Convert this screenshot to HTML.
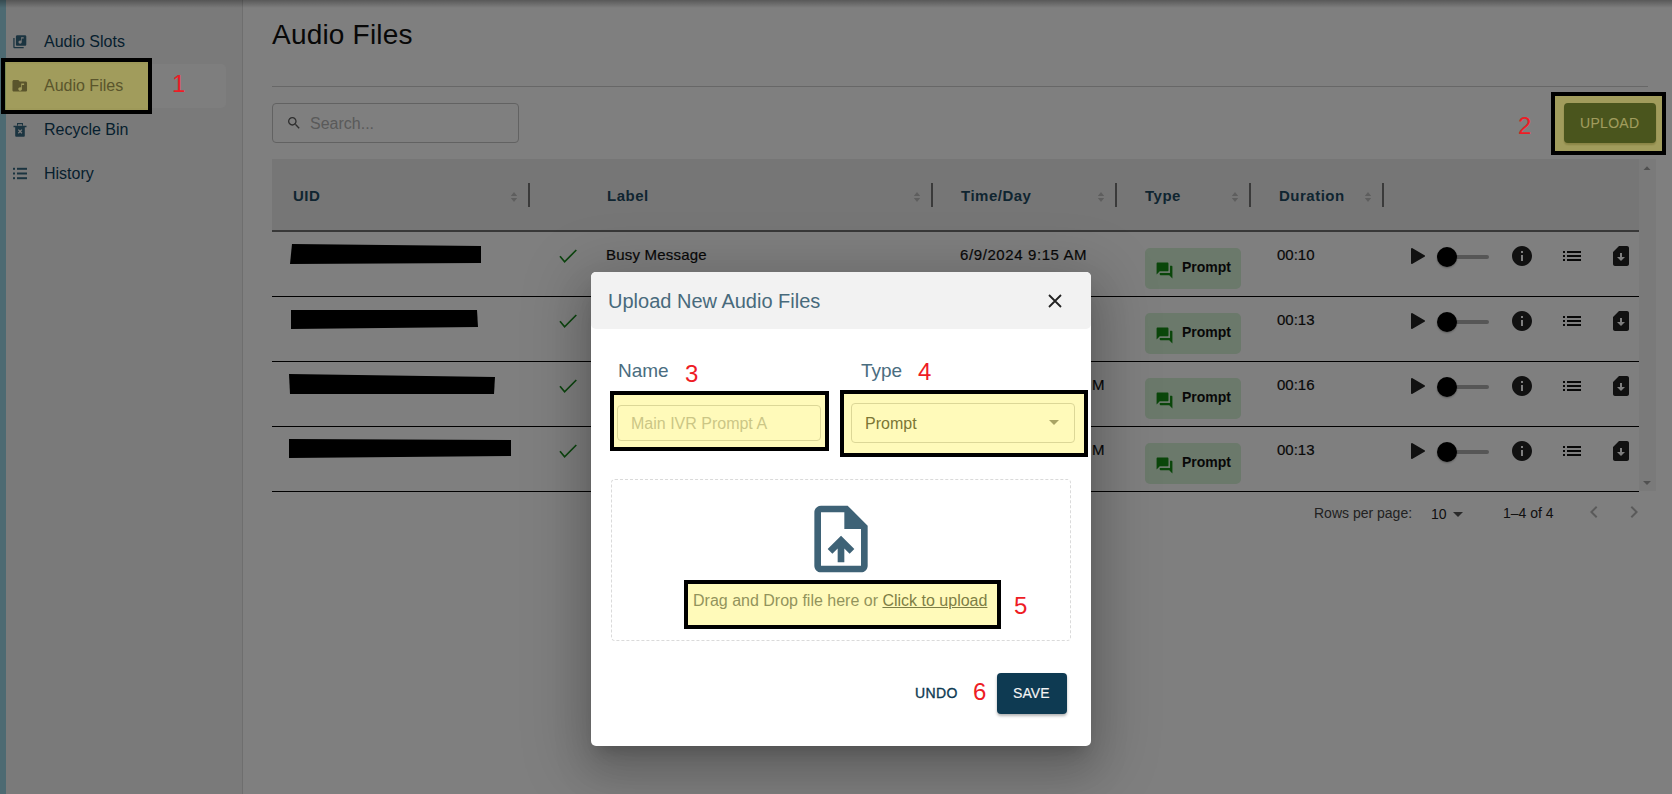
<!DOCTYPE html>
<html><head><meta charset="utf-8"><style>
html,body{margin:0;padding:0;}
body{width:1672px;height:794px;overflow:hidden;position:relative;background:#fff;font-family:'Liberation Sans',sans-serif;}
.t{position:absolute;white-space:nowrap;line-height:1;font-family:'Liberation Sans',sans-serif;}
</style></head><body>
<div id="page">
<div style="position:absolute;left:0;top:0;width:243px;height:794px;background:#f4f4f4;border-right:1px solid #dcdcdc;box-sizing:border-box"></div>
<div style="position:absolute;left:0;top:0;width:6px;height:794px;background:#9bd4e4"></div>
<div style="position:absolute;left:6px;top:64px;width:220px;height:44px;background:#fcfcfc;border-radius:0 5px 5px 0"></div>
<div class="t" style="left:44px;top:34px;font-size:16px;color:#0d3f5c;">Audio Slots</div>
<div class="t" style="left:44px;top:78px;font-size:16px;color:#3a3a7a;">Audio Files</div>
<div class="t" style="left:44px;top:122px;font-size:16px;color:#0d3f5c;">Recycle Bin</div>
<div class="t" style="left:44px;top:166px;font-size:16px;color:#0d3f5c;">History</div>
<svg style="position:absolute;left:12.1px;top:33.9px" width="15.6" height="15.6" viewBox="0 0 24 24"><path fill="#376881" d="M20 2H8c-1.1 0-2 .9-2 2v12c0 1.1.9 2 2 2h12c1.1 0 2-.9 2-2V4c0-1.1-.9-2-2-2zm-2 5h-3v5.5c0 1.38-1.12 2.5-2.5 2.5S10 13.88 10 12.5s1.12-2.5 2.5-2.5c.57 0 1.08.19 1.5.51V5h4v2zM4 6H2v14c0 1.1.9 2 2 2h14v-2H4V6z"/></svg>
<svg style="position:absolute;left:11px;top:77px" width="17.5" height="17.5" viewBox="0 0 24 24"><path fill="#3a3a7a" d="M20 6h-8l-2-2H4c-1.1 0-1.99.9-1.99 2L2 18c0 1.1.9 2 2 2h16c1.1 0 2-.9 2-2V8c0-1.1-.9-2-2-2zm-2 5h-3v5.5c0 1.38-1.12 2.5-2.5 2.5S10 17.88 10 16.5s1.12-2.5 2.5-2.5c.57 0 1.08.19 1.5.51V9h4v2z"/></svg>
<svg style="position:absolute;left:0;top:0;overflow:visible" width="1" height="1"><path fill="#376881" fill-rule="evenodd" d="M17 123h6v3h-1v-1.8h-4v1.8h-1z M13.5 125.8h13v1.4h-13z M15.2 127.2h9.6v8.6q0 .9-.9.9h-7.8q-.9 0-.9-.9z"/><path stroke="#f4f4f4" stroke-width="1.3" d="M18.3 129.6l3.6 3.6M21.9 129.6l-3.6 3.6"/></svg>
<svg style="position:absolute;left:0;top:0;overflow:visible" width="1" height="1"><g fill="#376881"><rect x="13" y="167.8" width="2" height="2"/><rect x="13" y="172.5" width="2" height="2"/><rect x="13" y="177.2" width="2" height="2"/><rect x="17" y="167.8" width="10" height="2"/><rect x="17" y="172.5" width="10" height="2"/><rect x="17" y="177.2" width="10" height="2"/></g></svg>
<div class="t" style="left:272px;top:21px;font-size:28px;color:#111;letter-spacing:.2px">Audio Files</div>
<div style="position:absolute;left:272px;top:86px;width:1376px;height:1px;background:#cfcfcf"></div>
<div style="position:absolute;left:272px;top:103px;width:247px;height:40px;border:1px solid #c4c4c4;border-radius:4px;box-sizing:border-box"></div>
<svg style="position:absolute;left:286px;top:115.3px" width="16" height="16" viewBox="0 0 24 24"><path fill="#5c5c5c" d="M15.5 14h-.79l-.28-.27C15.41 12.59 16 11.11 16 9.5 16 5.91 13.09 3 9.5 3S3 5.91 3 9.5 5.91 16 9.5 16c1.61 0 3.09-.59 4.23-1.57l.27.28v.79l5 4.99L20.49 19l-4.99-5zm-6 0C7.01 14 5 11.99 5 9.5S7.01 5 9.5 5 14 7.01 14 9.5 11.99 14 9.5 14z"/></svg>
<div class="t" style="left:310px;top:116px;font-size:16px;color:#b4b4b4;">Search...</div>
<div style="position:absolute;left:1564px;top:103px;width:92px;height:40px;background:#0e3a52;border-radius:4px;box-shadow:0 2px 2px rgba(0,0,0,.25)"></div>
<div class="t" style="left:1580px;top:116px;font-size:14px;color:#fff;letter-spacing:.3px">UPLOAD</div>
<div style="position:absolute;left:272px;top:159px;width:1367px;height:72px;background:#ededed"></div>
<div style="position:absolute;left:272px;top:230px;width:1367px;height:2px;background:#707070"></div>
<div class="t" style="left:293px;top:188px;font-size:15px;color:#1f4a62;font-weight:bold;letter-spacing:.5px">UID</div>
<div class="t" style="left:607px;top:188px;font-size:15px;color:#1f4a62;font-weight:bold;letter-spacing:.5px">Label</div>
<div class="t" style="left:961px;top:188px;font-size:15px;color:#1f4a62;font-weight:bold;letter-spacing:.5px">Time/Day</div>
<div class="t" style="left:1145px;top:188px;font-size:15px;color:#1f4a62;font-weight:bold;letter-spacing:.5px">Type</div>
<div class="t" style="left:1279px;top:188px;font-size:15px;color:#1f4a62;font-weight:bold;letter-spacing:.5px">Duration</div>
<svg style="position:absolute;left:510px;top:191px" width="8" height="12" viewBox="0 0 8 12"><path fill="#bdbdbd" d="M0.8 5 L4 1 L7.2 5Z M0.8 7 L4 11 L7.2 7Z"/></svg>
<svg style="position:absolute;left:913px;top:191px" width="8" height="12" viewBox="0 0 8 12"><path fill="#bdbdbd" d="M0.8 5 L4 1 L7.2 5Z M0.8 7 L4 11 L7.2 7Z"/></svg>
<svg style="position:absolute;left:1097px;top:191px" width="8" height="12" viewBox="0 0 8 12"><path fill="#bdbdbd" d="M0.8 5 L4 1 L7.2 5Z M0.8 7 L4 11 L7.2 7Z"/></svg>
<svg style="position:absolute;left:1231px;top:191px" width="8" height="12" viewBox="0 0 8 12"><path fill="#bdbdbd" d="M0.8 5 L4 1 L7.2 5Z M0.8 7 L4 11 L7.2 7Z"/></svg>
<svg style="position:absolute;left:1364px;top:191px" width="8" height="12" viewBox="0 0 8 12"><path fill="#bdbdbd" d="M0.8 5 L4 1 L7.2 5Z M0.8 7 L4 11 L7.2 7Z"/></svg>
<div style="position:absolute;left:528px;top:183px;width:2px;height:24px;background:#757575"></div>
<div style="position:absolute;left:931px;top:183px;width:2px;height:24px;background:#757575"></div>
<div style="position:absolute;left:1115px;top:183px;width:2px;height:24px;background:#757575"></div>
<div style="position:absolute;left:1249px;top:183px;width:2px;height:24px;background:#757575"></div>
<div style="position:absolute;left:1382px;top:183px;width:2px;height:24px;background:#757575"></div>
<div style="position:absolute;left:1639px;top:159px;width:17px;height:332px;background:#f4f4f4"></div>
<svg style="position:absolute;left:1642px;top:165px" width="10" height="6" viewBox="0 0 10 6"><path fill="#a0a0a0" d="M1.5 5L5 1.2L8.5 5Z"/></svg>
<svg style="position:absolute;left:1642px;top:480px" width="10" height="6" viewBox="0 0 10 6"><path fill="#a3a3a3" d="M1 1L5 5L9 1Z"/></svg>
<div style="position:absolute;left:272px;top:296px;width:1367px;height:1px;background:#000"></div>
<svg style="position:absolute;left:0;top:0;overflow:visible" width="1" height="1"><polygon points="292,244 481,246 481,263 290,264" fill="#000"/></svg>
<svg style="position:absolute;left:556px;top:244px" width="24" height="24" viewBox="0 0 24 24"><path fill="none" stroke="#1a8a1f" stroke-width="1.7" d="M4 12.3 L8.6 17.8 L20.3 6"/></svg>
<div class="t" style="left:606px;top:247px;font-size:15px;color:#111;letter-spacing:.2px;-webkit-text-stroke:.2px #111">Busy Message</div>
<div class="t" style="left:960px;top:247px;font-size:15px;color:#111;letter-spacing:.6px;-webkit-text-stroke:.2px #111">6/9/2024 9:15 AM</div>
<div style="position:absolute;left:1145px;top:248px;width:96px;height:41px;background:#d6f2d6;border-radius:5px"></div>
<svg style="position:absolute;left:1154.6px;top:260.5px" width="19" height="19" viewBox="0 0 24 24"><path fill="#148c14" d="M21 6h-2v9H6v2c0 .55.45 1 1 1h11l4 4V7c0-.55-.45-1-1-1zm-4 6V3c0-.55-.45-1-1-1H3c-.55 0-1 .45-1 1v14l4-4h10c.55 0 1-.45 1-1z"/></svg>
<div class="t" style="left:1182px;top:260px;font-size:14px;color:#111;font-weight:bold">Prompt</div>
<div class="t" style="left:1277px;top:247px;font-size:15px;color:#111;-webkit-text-stroke:.2px #111">00:10</div>
<svg style="position:absolute;left:1409px;top:246px" width="20" height="20" viewBox="0 0 20 20"><path fill="#222" stroke="#222" stroke-width="2" stroke-linejoin="round" d="M3 3 L15 10 L3 17Z"/></svg>
<div style="position:absolute;left:1447px;top:255px;width:42px;height:3.5px;background:#adadad;border-radius:2px"></div>
<div style="position:absolute;left:1437px;top:247px;width:20px;height:20px;background:#000;border-radius:50%;box-shadow:0 1px 2px rgba(0,0,0,.3)"></div>
<svg style="position:absolute;left:1510px;top:244px" width="24" height="24" viewBox="0 0 24 24"><path fill="#222" d="M12 2C6.48 2 2 6.48 2 12s4.48 10 10 10 10-4.48 10-10S17.52 2 12 2zm1 15h-2v-6h2v6zm0-8h-2V7h2v2z"/></svg>
<svg style="position:absolute;left:1563px;top:251px" width="18" height="10"><g fill="#111"><rect x="0" y="0" width="2" height="2"/><rect x="0" y="4" width="2" height="2"/><rect x="0" y="8" width="2" height="2"/><rect x="4" y="0" width="14" height="2"/><rect x="4" y="4" width="14" height="2"/><rect x="4" y="8" width="14" height="2"/></g></svg>
<svg style="position:absolute;left:1609px;top:244px" width="24" height="24" viewBox="0 0 24 24"><path fill="#222" d="M18 2h-8L4 8v12c0 1.1.9 2 2 2h12c1.1 0 2-.9 2-2V4c0-1.1-.9-2-2-2zm-6 15-4-4h3V9.02L13 9v4h3l-4 4z"/></svg>
<div style="position:absolute;left:272px;top:361px;width:1367px;height:1px;background:#000"></div>
<svg style="position:absolute;left:0;top:0;overflow:visible" width="1" height="1"><polygon points="291,310 477,310 478,327 291,329" fill="#000"/></svg>
<svg style="position:absolute;left:556px;top:309px" width="24" height="24" viewBox="0 0 24 24"><path fill="none" stroke="#1a8a1f" stroke-width="1.7" d="M4 12.3 L8.6 17.8 L20.3 6"/></svg>
<div style="position:absolute;left:1145px;top:313px;width:96px;height:41px;background:#d6f2d6;border-radius:5px"></div>
<svg style="position:absolute;left:1154.6px;top:325.5px" width="19" height="19" viewBox="0 0 24 24"><path fill="#148c14" d="M21 6h-2v9H6v2c0 .55.45 1 1 1h11l4 4V7c0-.55-.45-1-1-1zm-4 6V3c0-.55-.45-1-1-1H3c-.55 0-1 .45-1 1v14l4-4h10c.55 0 1-.45 1-1z"/></svg>
<div class="t" style="left:1182px;top:325px;font-size:14px;color:#111;font-weight:bold">Prompt</div>
<div class="t" style="left:1277px;top:312px;font-size:15px;color:#111;-webkit-text-stroke:.2px #111">00:13</div>
<svg style="position:absolute;left:1409px;top:311px" width="20" height="20" viewBox="0 0 20 20"><path fill="#222" stroke="#222" stroke-width="2" stroke-linejoin="round" d="M3 3 L15 10 L3 17Z"/></svg>
<div style="position:absolute;left:1447px;top:320px;width:42px;height:3.5px;background:#adadad;border-radius:2px"></div>
<div style="position:absolute;left:1437px;top:312px;width:20px;height:20px;background:#000;border-radius:50%;box-shadow:0 1px 2px rgba(0,0,0,.3)"></div>
<svg style="position:absolute;left:1510px;top:309px" width="24" height="24" viewBox="0 0 24 24"><path fill="#222" d="M12 2C6.48 2 2 6.48 2 12s4.48 10 10 10 10-4.48 10-10S17.52 2 12 2zm1 15h-2v-6h2v6zm0-8h-2V7h2v2z"/></svg>
<svg style="position:absolute;left:1563px;top:316px" width="18" height="10"><g fill="#111"><rect x="0" y="0" width="2" height="2"/><rect x="0" y="4" width="2" height="2"/><rect x="0" y="8" width="2" height="2"/><rect x="4" y="0" width="14" height="2"/><rect x="4" y="4" width="14" height="2"/><rect x="4" y="8" width="14" height="2"/></g></svg>
<svg style="position:absolute;left:1609px;top:309px" width="24" height="24" viewBox="0 0 24 24"><path fill="#222" d="M18 2h-8L4 8v12c0 1.1.9 2 2 2h12c1.1 0 2-.9 2-2V4c0-1.1-.9-2-2-2zm-6 15-4-4h3V9.02L13 9v4h3l-4 4z"/></svg>
<div style="position:absolute;left:272px;top:426px;width:1367px;height:1px;background:#000"></div>
<svg style="position:absolute;left:0;top:0;overflow:visible" width="1" height="1"><polygon points="289,374 495,377 494,394 290,394" fill="#000"/></svg>
<svg style="position:absolute;left:556px;top:374px" width="24" height="24" viewBox="0 0 24 24"><path fill="none" stroke="#1a8a1f" stroke-width="1.7" d="M4 12.3 L8.6 17.8 L20.3 6"/></svg>
<div class="t" style="left:1092px;top:377px;font-size:15px;color:#111;-webkit-text-stroke:.2px #111">M</div>
<div style="position:absolute;left:1145px;top:378px;width:96px;height:41px;background:#d6f2d6;border-radius:5px"></div>
<svg style="position:absolute;left:1154.6px;top:390.5px" width="19" height="19" viewBox="0 0 24 24"><path fill="#148c14" d="M21 6h-2v9H6v2c0 .55.45 1 1 1h11l4 4V7c0-.55-.45-1-1-1zm-4 6V3c0-.55-.45-1-1-1H3c-.55 0-1 .45-1 1v14l4-4h10c.55 0 1-.45 1-1z"/></svg>
<div class="t" style="left:1182px;top:390px;font-size:14px;color:#111;font-weight:bold">Prompt</div>
<div class="t" style="left:1277px;top:377px;font-size:15px;color:#111;-webkit-text-stroke:.2px #111">00:16</div>
<svg style="position:absolute;left:1409px;top:376px" width="20" height="20" viewBox="0 0 20 20"><path fill="#222" stroke="#222" stroke-width="2" stroke-linejoin="round" d="M3 3 L15 10 L3 17Z"/></svg>
<div style="position:absolute;left:1447px;top:385px;width:42px;height:3.5px;background:#adadad;border-radius:2px"></div>
<div style="position:absolute;left:1437px;top:377px;width:20px;height:20px;background:#000;border-radius:50%;box-shadow:0 1px 2px rgba(0,0,0,.3)"></div>
<svg style="position:absolute;left:1510px;top:374px" width="24" height="24" viewBox="0 0 24 24"><path fill="#222" d="M12 2C6.48 2 2 6.48 2 12s4.48 10 10 10 10-4.48 10-10S17.52 2 12 2zm1 15h-2v-6h2v6zm0-8h-2V7h2v2z"/></svg>
<svg style="position:absolute;left:1563px;top:381px" width="18" height="10"><g fill="#111"><rect x="0" y="0" width="2" height="2"/><rect x="0" y="4" width="2" height="2"/><rect x="0" y="8" width="2" height="2"/><rect x="4" y="0" width="14" height="2"/><rect x="4" y="4" width="14" height="2"/><rect x="4" y="8" width="14" height="2"/></g></svg>
<svg style="position:absolute;left:1609px;top:374px" width="24" height="24" viewBox="0 0 24 24"><path fill="#222" d="M18 2h-8L4 8v12c0 1.1.9 2 2 2h12c1.1 0 2-.9 2-2V4c0-1.1-.9-2-2-2zm-6 15-4-4h3V9.02L13 9v4h3l-4 4z"/></svg>
<div style="position:absolute;left:272px;top:491px;width:1367px;height:1px;background:#000"></div>
<svg style="position:absolute;left:0;top:0;overflow:visible" width="1" height="1"><polygon points="289,439 511,440 511,456 289,458" fill="#000"/></svg>
<svg style="position:absolute;left:556px;top:439px" width="24" height="24" viewBox="0 0 24 24"><path fill="none" stroke="#1a8a1f" stroke-width="1.7" d="M4 12.3 L8.6 17.8 L20.3 6"/></svg>
<div class="t" style="left:1092px;top:442px;font-size:15px;color:#111;-webkit-text-stroke:.2px #111">M</div>
<div style="position:absolute;left:1145px;top:443px;width:96px;height:41px;background:#d6f2d6;border-radius:5px"></div>
<svg style="position:absolute;left:1154.6px;top:455.5px" width="19" height="19" viewBox="0 0 24 24"><path fill="#148c14" d="M21 6h-2v9H6v2c0 .55.45 1 1 1h11l4 4V7c0-.55-.45-1-1-1zm-4 6V3c0-.55-.45-1-1-1H3c-.55 0-1 .45-1 1v14l4-4h10c.55 0 1-.45 1-1z"/></svg>
<div class="t" style="left:1182px;top:455px;font-size:14px;color:#111;font-weight:bold">Prompt</div>
<div class="t" style="left:1277px;top:442px;font-size:15px;color:#111;-webkit-text-stroke:.2px #111">00:13</div>
<svg style="position:absolute;left:1409px;top:441px" width="20" height="20" viewBox="0 0 20 20"><path fill="#222" stroke="#222" stroke-width="2" stroke-linejoin="round" d="M3 3 L15 10 L3 17Z"/></svg>
<div style="position:absolute;left:1447px;top:450px;width:42px;height:3.5px;background:#adadad;border-radius:2px"></div>
<div style="position:absolute;left:1437px;top:442px;width:20px;height:20px;background:#000;border-radius:50%;box-shadow:0 1px 2px rgba(0,0,0,.3)"></div>
<svg style="position:absolute;left:1510px;top:439px" width="24" height="24" viewBox="0 0 24 24"><path fill="#222" d="M12 2C6.48 2 2 6.48 2 12s4.48 10 10 10 10-4.48 10-10S17.52 2 12 2zm1 15h-2v-6h2v6zm0-8h-2V7h2v2z"/></svg>
<svg style="position:absolute;left:1563px;top:446px" width="18" height="10"><g fill="#111"><rect x="0" y="0" width="2" height="2"/><rect x="0" y="4" width="2" height="2"/><rect x="0" y="8" width="2" height="2"/><rect x="4" y="0" width="14" height="2"/><rect x="4" y="4" width="14" height="2"/><rect x="4" y="8" width="14" height="2"/></g></svg>
<svg style="position:absolute;left:1609px;top:439px" width="24" height="24" viewBox="0 0 24 24"><path fill="#222" d="M18 2h-8L4 8v12c0 1.1.9 2 2 2h12c1.1 0 2-.9 2-2V4c0-1.1-.9-2-2-2zm-6 15-4-4h3V9.02L13 9v4h3l-4 4z"/></svg>
<div class="t" style="left:1314px;top:506px;font-size:14px;color:#444;">Rows per page:</div>
<div class="t" style="left:1431px;top:507px;font-size:14px;color:#222;">10</div>
<svg style="position:absolute;left:1453px;top:512px" width="10" height="6" viewBox="0 0 10 6"><path fill="#555" d="M0 0L5 5L10 0Z"/></svg>
<div class="t" style="left:1503px;top:506px;font-size:14px;color:#222;">1–4 of 4</div>
<svg style="position:absolute;left:1582px;top:500px" width="24" height="24" viewBox="0 0 24 24"><path fill="#b5b5b5" d="M15.41 7.41 14 6l-6 6 6 6 1.41-1.41L10.83 12z"/></svg>
<svg style="position:absolute;left:1622px;top:500px" width="24" height="24" viewBox="0 0 24 24"><path fill="#b5b5b5" d="M10 6 8.59 7.41 13.17 12l-4.58 4.59L10 18l6-6z"/></svg>
</div>
<div style="position:absolute;left:0;top:0;width:1672px;height:794px;background:rgba(0,0,0,.5)"></div>
<div style="position:absolute;left:0;top:0;width:1672px;height:8px;background:linear-gradient(rgba(0,0,0,.3),rgba(0,0,0,0))"></div>
<div style="position:absolute;left:591px;top:272px;width:500px;height:474px;background:#fff;border-radius:5px;box-shadow:0 11px 15px -7px rgba(0,0,0,.18),0 24px 38px 3px rgba(0,0,0,.1),0 12px 60px 14px rgba(0,0,0,.18)"></div>
<div style="position:absolute;left:591px;top:272px;width:500px;height:57px;background:#f2f2f2;border-radius:5px"></div>
<div class="t" style="left:608px;top:291px;font-size:20px;color:#486a7c;">Upload New Audio Files</div>
<svg style="position:absolute;left:1048px;top:294px" width="14" height="14" viewBox="0 0 14 14"><path stroke="#222" stroke-width="1.8" d="M1 1L13 13M13 1L1 13"/></svg>
<div class="t" style="left:618px;top:361px;font-size:19px;color:#4a6d7f;">Name</div>
<div class="t" style="left:861px;top:361px;font-size:19px;color:#4a6d7f;">Type</div>
<div style="position:absolute;left:617px;top:405px;width:204px;height:36px;border:1px solid #cfcfcf;border-radius:4px;box-sizing:border-box;background:#fff"></div>
<div class="t" style="left:631px;top:416px;font-size:16px;color:#b8b8b8;">Main IVR Prompt A</div>
<div style="position:absolute;left:851px;top:403px;width:224px;height:40px;border:1px solid #cfcfcf;border-radius:4px;box-sizing:border-box;background:#fff"></div>
<div class="t" style="left:865px;top:416px;font-size:16px;color:#4a4a4a;">Prompt</div>
<svg style="position:absolute;left:1049px;top:420px" width="10" height="6" viewBox="0 0 10 6"><path fill="#8a8a8a" d="M0 0L5 5L10 0Z"/></svg>
<div style="position:absolute;left:611px;top:479px;width:460px;height:162px;border:1px dashed #dadada;border-radius:4px;box-sizing:border-box"></div>
<svg style="position:absolute;left:801px;top:499px" width="80" height="80" viewBox="0 0 24 24"><path fill="#3e6276" d="M14 2H6c-1.1 0-1.99.9-1.99 2L4 20c0 1.1.89 2 1.99 2H18c1.1 0 2-.9 2-2V8l-6-6zm4 18H6V4h7v5h5v11zM8 15.01l1.41 1.41L11 14.84V19h2v-4.16l1.59 1.59L16 15.01 12.01 11 8 15.01z"/></svg>
<div class="t" style="left:693px;top:593px;font-size:16px;color:#6a7280;">Drag and Drop file here or <span style="text-decoration:underline;color:#4e5560">Click to upload</span></div>
<div class="t" style="left:915px;top:686px;font-size:14px;color:#0e3a52;letter-spacing:.35px;-webkit-text-stroke:.35px #0e3a52">UNDO</div>
<div style="position:absolute;left:997px;top:673px;width:70px;height:41px;background:#0e3a52;border-radius:4px;box-shadow:0 2px 3px rgba(0,0,0,.3)"></div>
<div class="t" style="left:1013px;top:686px;font-size:14px;color:#f4f4f4;letter-spacing:.1px;-webkit-text-stroke:.15px #f4f4f4">SAVE</div>
<div style="position:absolute;left:1px;top:58px;width:151px;height:56px;background:rgba(255,236,0,.27)"></div>
<div style="position:absolute;left:1px;top:58px;width:151px;height:56px;border:4px solid #000;box-sizing:border-box"></div>
<div style="position:absolute;left:1551px;top:92px;width:115px;height:63px;background:rgba(255,236,0,.27)"></div>
<div style="position:absolute;left:1551px;top:92px;width:115px;height:63px;border:4px solid #000;box-sizing:border-box"></div>
<div style="position:absolute;left:610px;top:391px;width:219px;height:60px;background:rgba(255,236,0,.27)"></div>
<div style="position:absolute;left:610px;top:391px;width:219px;height:60px;border:4px solid #000;box-sizing:border-box"></div>
<div style="position:absolute;left:840px;top:390px;width:248px;height:67px;background:rgba(255,236,0,.27)"></div>
<div style="position:absolute;left:840px;top:390px;width:248px;height:67px;border:4px solid #000;box-sizing:border-box"></div>
<div style="position:absolute;left:684px;top:580px;width:317px;height:49px;background:rgba(255,236,0,.27)"></div>
<div style="position:absolute;left:684px;top:580px;width:317px;height:49px;border:4px solid #000;box-sizing:border-box"></div>
<div class="t" style="left:172px;top:72px;font-size:24px;color:#ee1c25;">1</div>
<div class="t" style="left:1518px;top:114px;font-size:24px;color:#ee1c25;">2</div>
<div class="t" style="left:685px;top:362px;font-size:24px;color:#ee1c25;">3</div>
<div class="t" style="left:918px;top:360px;font-size:24px;color:#ee1c25;">4</div>
<div class="t" style="left:1014px;top:594px;font-size:24px;color:#ee1c25;">5</div>
<div class="t" style="left:973px;top:680px;font-size:24px;color:#ee1c25;">6</div>
</body></html>
